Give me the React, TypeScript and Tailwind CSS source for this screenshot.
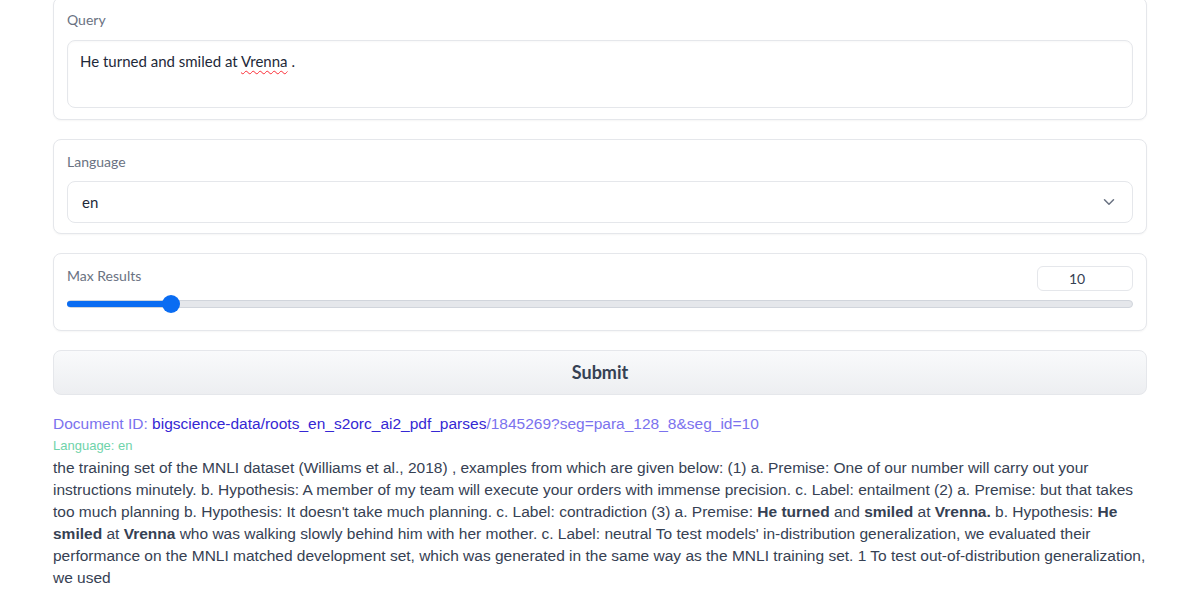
import { ChevronDown } from "lucide-react";

const ui = { fontFamily: "Lato, 'Noto Sans', sans-serif" };
const doc = { fontFamily: "'Liberation Sans', Arial, sans-serif" };

const Panel = ({ children, className = "" }: { children: React.ReactNode; className?: string }) => (
  <div className={`rounded-lg border border-gray-200 bg-white px-[13px] shadow-[0_1px_2px_rgba(0,0,0,0.04)] ${className}`}>
    {children}
  </div>
);

const Label = ({ text }: { text: string }) => (
  <div className="h-5 text-[14px] leading-5 text-gray-500">{text}</div>
);

const App = () => {
  const value = 10;
  const pct = 9.8;

  return (
    <div className="min-h-screen bg-white overflow-hidden" style={ui}>
      <div className="mx-auto -mt-[3px] flex w-[1094px] flex-col gap-[19px]">
        <Panel className="pt-3 pb-[11px]">
          <Label text="Query" />
          <div className="mt-[10px] h-[68px] rounded-lg border border-gray-200 px-3 pt-[9px] text-[15px] text-gray-800 shadow-[inset_0_1px_2px_rgba(0,0,0,0.03)]">
            He turned and smiled at{" "}
            <span className="underline decoration-wavy decoration-red-500 decoration-1 underline-offset-[3px]">Vrenna</span> .
          </div>
        </Panel>

        <Panel className="pt-3 pb-[10px]">
          <Label text="Language" />
          <div className="mt-[9px] flex h-[42px] items-center justify-between rounded-lg border border-gray-200 pl-[14px] pr-[14px] text-[15px] text-gray-800">
            <span>en</span>
            <ChevronDown className="h-[18px] w-[18px] text-gray-500" strokeWidth={2} />
          </div>
        </Panel>

        <Panel className="pt-3 pb-[17px]">
          <div className="flex h-[25px] items-start justify-between">
            <Label text="Max Results" />
            <div className="flex h-[25px] w-[96px] items-center justify-center rounded-md border border-gray-200 pr-4 text-[14px] text-gray-700">
              {value}
            </div>
          </div>
          <div className="relative mt-1 h-[18px]">
            <div className="absolute left-0 right-0 top-[5px] h-[8px] rounded-full border border-gray-300 bg-gray-200" />
            <div
              className="absolute left-0 top-[6px] h-[6px] rounded-full bg-[#0a6cf2]"
              style={{ width: `${pct}%` }}
            />
            <div
              className="absolute top-0 h-[18px] w-[18px] -translate-x-1/2 rounded-full bg-[#0a6cf2]"
              style={{ left: `${pct}%` }}
            />
          </div>
        </Panel>

        <button className="h-[45px] w-full rounded-lg border border-gray-200 bg-gradient-to-b from-gray-50 to-gray-200/70 text-[18px] font-bold text-gray-700">
          Submit
        </button>
      </div>

      <div className="mx-auto mt-[18px] w-[1094px]" style={doc}>
        <div className="h-[22px] text-[15.5px] leading-[22px] text-[#7b72ee]">
          Document ID: <span className="text-[#3527d4]">bigscience-data/roots_en_s2orc_ai2_pdf_parses</span>
          /1845269?seg=para_128_8&amp;seg_id=10
        </div>
        <div className="mt-[2px] h-[18px] text-[13px] leading-[18px] text-[#6fd3aa]">Language: en</div>
        <p className="mt-[2px] text-[15.5px] leading-[22px] text-gray-700">
          the training set of the MNLI dataset (Williams et al., 2018) , examples from which are given below: (1) a. Premise:
          One of our number will carry out your instructions minutely. b. Hypothesis: A member of my team will execute your
          orders with immense precision. c. Label: entailment (2) a. Premise: but that takes too much planning b. Hypothesis:
          It doesn't take much planning. c. Label: contradiction (3) a. Premise: <b>He turned</b> and <b>smiled</b> at{" "}
          <b>Vrenna.</b> b. Hypothesis: <b>He smiled</b> at <b>Vrenna</b> who was walking slowly behind him with her mother.
          c. Label: neutral To test models' in-distribution generalization, we evaluated their performance on the MNLI matched
          development set, which was generated in the same way as the MNLI training set. 1 To test out-of-distribution
          generalization, we used
        </p>
      </div>
    </div>
  );
};

export default App;
